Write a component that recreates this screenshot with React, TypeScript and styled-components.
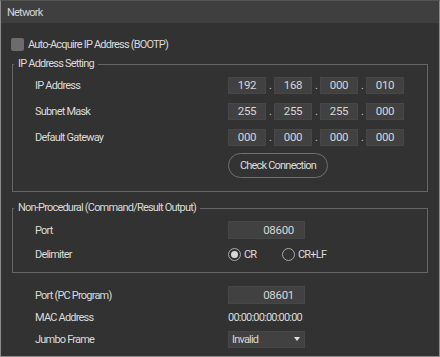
import React from 'react';
import styled, {createGlobalStyle} from 'styled-components';

const GlobalStyle = createGlobalStyle`
    html, body {
        margin: 0;
        padding: 0;
        background: #323232;
    }
    body {
        font-family: Roboto, "Liberation Sans", sans-serif;
        font-size: 11px;
        letter-spacing: -0.8px;
        color: #dadada;
    }
`;

const Window = styled.div`
    width: 440px;
    height: 357px;
    box-sizing: border-box;
    border: 1px solid #8a8a8a;
    border-top-color: #555;
    background: #323232;
    display: flex;
    flex-direction: column;
`;

const TitleBar = styled.div`
    height: 22px;
    background: #3f3f3f;
    display: flex;
    align-items: center;
    padding-left: 6px;
    color: #d4d4d4;
`;

const Body = styled.div`
    display: flex;
    flex-direction: column;
    padding-top: 11px;
`;

const CheckRow = styled.label`
    height: 20px;
    display: flex;
    align-items: center;
    gap: 4px;
    padding-left: 10px;
`;

const CheckBox = styled.span`
    width: 13px;
    height: 13px;
    border-radius: 2px;
    background: #6c6c6c;
`;

const Group = styled.fieldset<{$top: number; $bottom: number}>`
    margin: ${p => p.$top}px 11px 0 11px;
    padding: 0 0 ${p => p.$bottom}px 0;
    border: 1px solid #666;
    min-width: 0;
`;

const Legend = styled.legend`
    margin-left: 1px;
    padding: 0 4px;
    line-height: 14px;
    color: #dadada;
`;

const Row = styled.div<{$h: number; $indent: number}>`
    height: ${p => p.$h}px;
    display: grid;
    grid-template-columns: 193px auto;
    align-items: center;
    padding-left: ${p => p.$indent}px;
`;

const Label = styled.span`
    color: #dadada;
`;

const Controls = styled.div`
    display: flex;
    align-items: center;
`;

const IpBox = styled.div`
    width: 38px;
    height: 17px;
    box-sizing: border-box;
    background: #414141;
    border: 1px solid #474747;
    display: flex;
    align-items: center;
    justify-content: center;
    color: #d6d6d6;
    letter-spacing: -0.3px;
    font-size: 11.5px;
`;

const Dot = styled.span`
    width: 8px;
    align-self: flex-end;
    text-align: center;
    line-height: 12px;
    height: 14px;
    font-size: 11px;
    color: #cfcfcf;
`;

const NumberBox = styled.div`
    width: 77px;
    height: 18px;
    box-sizing: border-box;
    background: #414141;
    border: 1px solid #474747;
    display: flex;
    align-items: center;
    justify-content: flex-end;
    padding-right: 10px;
    color: #d6d6d6;
    letter-spacing: -0.3px;
    font-size: 11.5px;
`;

const PillButton = styled.button`
    width: 100px;
    height: 25px;
    box-sizing: border-box;
    margin-left: 215px;
    margin-top: 3px;
    border: 1px solid #707070;
    border-radius: 13px;
    background: #333;
    color: #dcdcdc;
    font: inherit;
    letter-spacing: inherit;
    padding: 0;
    white-space: nowrap;
`;

const Radio = styled.label`
    display: flex;
    align-items: center;
    gap: 3px;
    width: 54px;
`;

const RadioCircle = styled.span<{$on?: boolean}>`
    width: 13px;
    height: 13px;
    box-sizing: border-box;
    border-radius: 50%;
    border: 1px solid #a8a8a8;
    display: flex;
    align-items: center;
    justify-content: center;
    &::after {
        content: '';
        width: 7px;
        height: 7px;
        border-radius: 50%;
        background: ${p => (p.$on ? '#d8d8d8' : 'transparent')};
    }
`;

const Select = styled.div`
    width: 77px;
    height: 17px;
    box-sizing: border-box;
    background: #414141;
    border: 1px solid #474747;
    display: flex;
    align-items: center;
    justify-content: space-between;
    padding: 0 4px 0 3px;
    color: #d6d6d6;
`;

const Caret = styled.span`
    width: 0;
    height: 0;
    border-left: 3.5px solid transparent;
    border-right: 3.5px solid transparent;
    border-top: 4px solid #e0e0e0;
`;

const ipRows = [
    {label: 'IP Address', parts: ['192', '168', '000', '010']},
    {label: 'Subnet Mask', parts: ['255', '255', '255', '000']},
    {label: 'Default Gateway', parts: ['000', '000', '000', '000']},
];

const IpField = ({parts}: {parts: string[]}) => (
    <Controls>
        {parts.map((p, i) => (
            <React.Fragment key={i}>
                {i > 0 && <Dot>.</Dot>}
                <IpBox>{p}</IpBox>
            </React.Fragment>
        ))}
    </Controls>
);

export default function App() {
    return (
        <>
            <GlobalStyle/>
            <Window>
                <TitleBar>Network</TitleBar>
                <Body>
                    <CheckRow>
                        <CheckBox/>
                        Auto-Acquire IP Address (BOOTP)
                    </CheckRow>

                    <Group $top={3} $bottom={13}>
                        <Legend>IP Address Setting</Legend>
                        <div style={{height: 1}}/>
                        {ipRows.map(r => (
                            <Row key={r.label} $h={26} $indent={22}>
                                <Label>{r.label}</Label>
                                <IpField parts={r.parts}/>
                            </Row>
                        ))}
                        <PillButton>Check Connection</PillButton>
                    </Group>

                    <Group $top={9} $bottom={6}>
                        <Legend>Non-Procedural (Command/Result Output)</Legend>
                        <div style={{height: 3}}/>
                        <Row $h={24} $indent={22}>
                            <Label>Port</Label>
                            <NumberBox>08600</NumberBox>
                        </Row>
                        <Row $h={24} $indent={22}>
                            <Label>Delimiter</Label>
                            <Controls>
                                <Radio><RadioCircle $on/>CR</Radio>
                                <Radio><RadioCircle/>CR+LF</Radio>
                            </Controls>
                        </Row>
                    </Group>

                    <div style={{height: 11}}/>
                    <Row $h={22} $indent={34}>
                        <Label>Port (PC Program)</Label>
                        <NumberBox>08601</NumberBox>
                    </Row>
                    <Row $h={22} $indent={34}>
                        <Label>MAC Address</Label>
                        <span>00:00:00:00:00:00</span>
                    </Row>
                    <Row $h={22} $indent={34}>
                        <Label>Jumbo Frame</Label>
                        <Select>Invalid<Caret/></Select>
                    </Row>
                </Body>
            </Window>
        </>
    );
}
